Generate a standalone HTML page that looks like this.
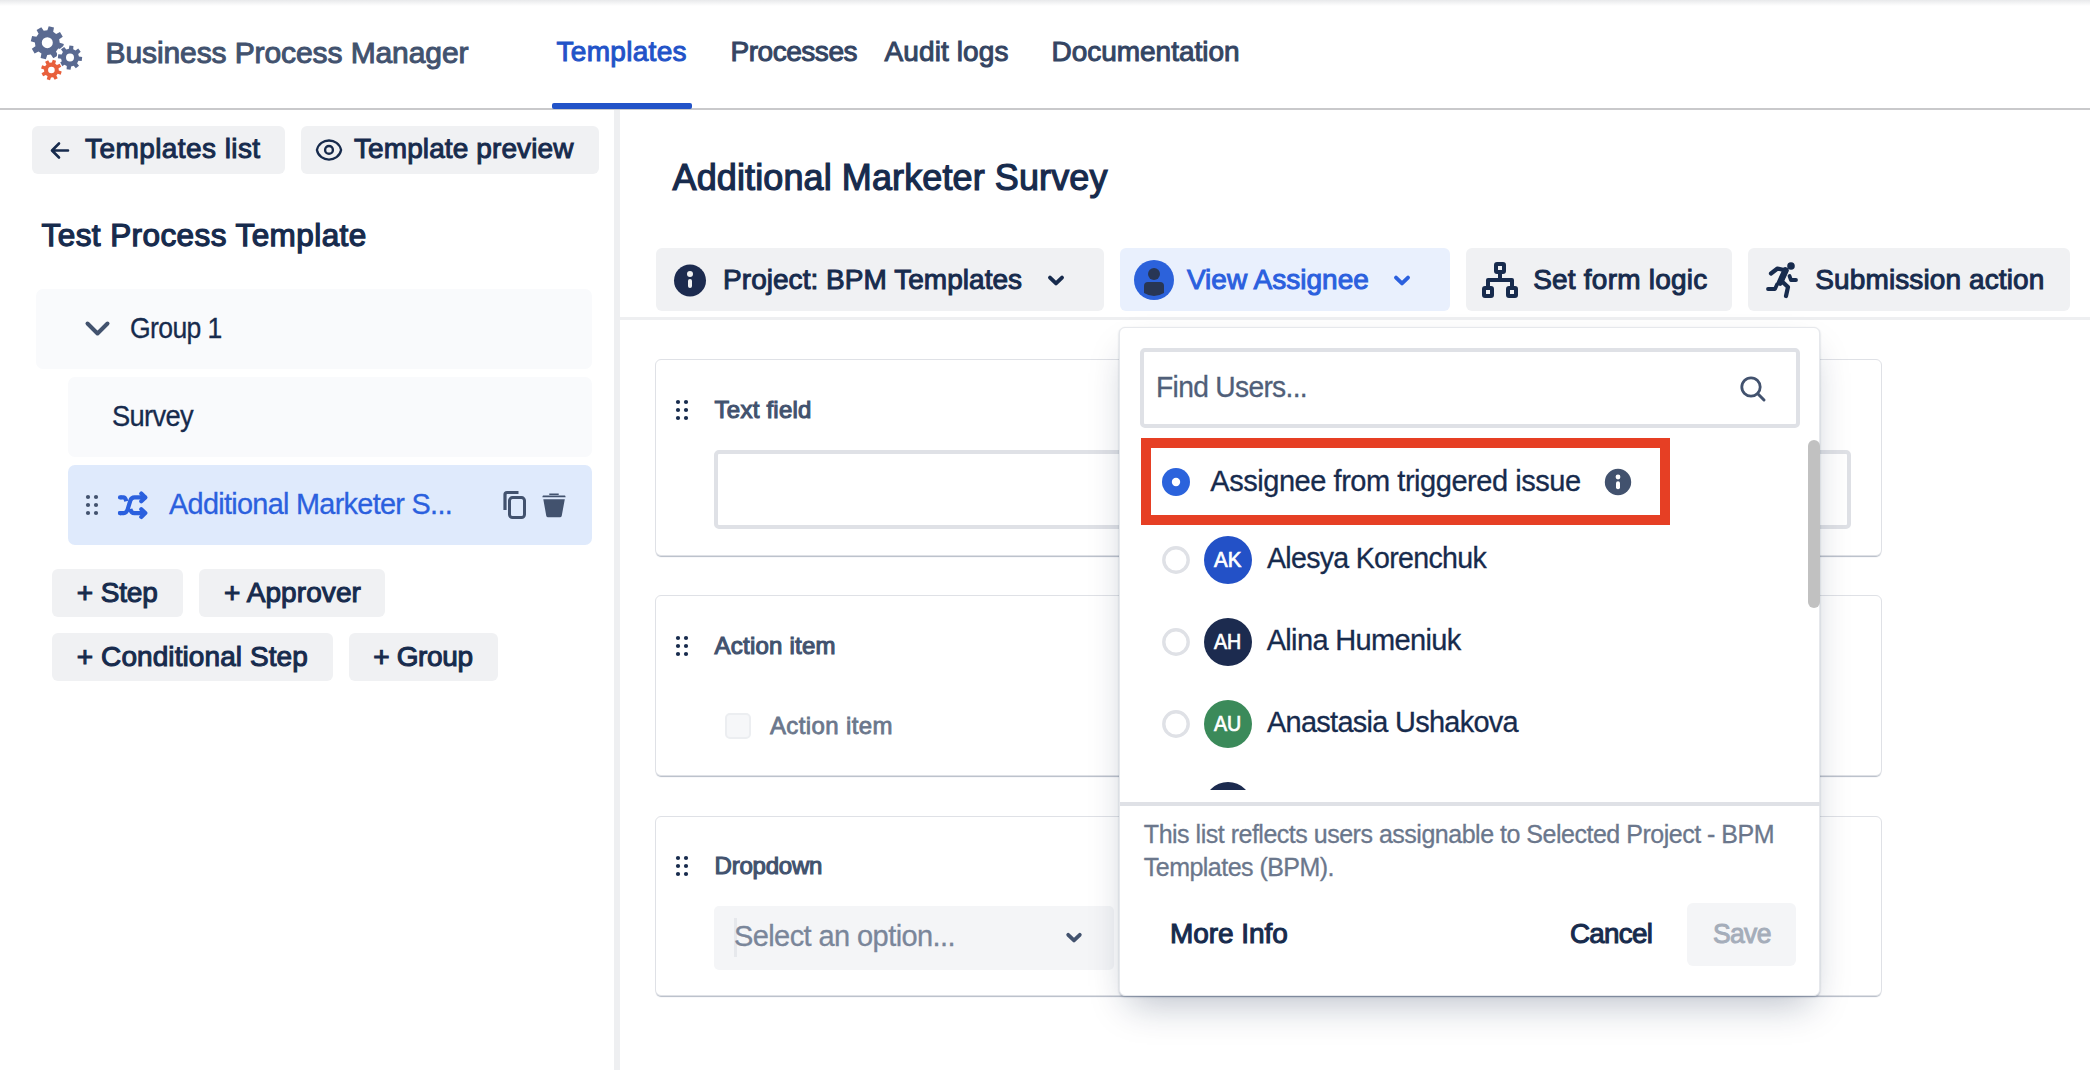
<!DOCTYPE html>
<html><head><meta charset="utf-8"><title>BPM</title>
<style>
html,body{margin:0;padding:0;background:#fff;width:2090px;height:1070px;overflow:hidden;position:relative}
body{font-family:"Liberation Sans",sans-serif}
.t{position:absolute;white-space:nowrap}
.b{position:absolute}
.s{position:absolute;overflow:visible}
</style></head><body>
<div class="b" style="left:0;top:0;width:2090px;height:6px;background:linear-gradient(#e8e9eb,#ffffff)"></div>
<div class="b" style="left:0px;top:108px;width:2090px;height:2px;background:#c9c9cb;border-radius:0px;"></div>
<div class="b" style="left:552px;top:103px;width:140px;height:6px;background:#2253c8;border-radius:2px;"></div>
<svg class="s" style="left:0px;top:0px;" width="110" height="100" viewBox="0 0 110 100"><path d="M59.70 42.78 L63.84 44.11 L62.49 49.39 L58.22 48.57 L56.01 51.53 L58.00 55.39 L53.31 58.17 L50.87 54.58 L47.22 55.10 L45.89 59.24 L40.61 57.89 L41.43 53.62 L38.47 51.41 L34.61 53.40 L31.83 48.71 L35.42 46.27 L34.90 42.62 L30.76 41.29 L32.11 36.01 L36.38 36.83 L38.59 33.87 L36.60 30.01 L41.29 27.23 L43.73 30.82 L47.38 30.30 L48.71 26.16 L53.99 27.51 L53.17 31.78 L56.13 33.99 L59.99 32.00 L62.77 36.69 L59.18 39.13Z M52.80 42.70 A5.5 5.5 0 1 0 41.80 42.70 A5.5 5.5 0 1 0 52.80 42.70Z" fill="#5a6a91" fill-rule="evenodd"/><path d="M78.93 56.49 L82.19 57.05 L81.71 61.03 L78.41 60.80 L77.10 63.13 L79.01 65.83 L75.85 68.30 L73.69 65.81 L71.11 66.53 L70.55 69.79 L66.57 69.31 L66.80 66.01 L64.47 64.70 L61.77 66.61 L59.30 63.45 L61.79 61.29 L61.07 58.71 L57.81 58.15 L58.29 54.17 L61.59 54.40 L62.90 52.07 L60.99 49.37 L64.15 46.90 L66.31 49.39 L68.89 48.67 L69.45 45.41 L73.43 45.89 L73.20 49.19 L75.53 50.50 L78.23 48.59 L80.70 51.75 L78.21 53.91Z M74.00 57.60 A4.0 4.0 0 1 0 66.00 57.60 A4.0 4.0 0 1 0 74.00 57.60Z" fill="#5a6a91" fill-rule="evenodd" stroke="#fff" stroke-width="2.4" paint-order="stroke" stroke-linejoin="round"/><path d="M58.79 70.42 L61.71 71.40 L60.70 74.66 L57.73 73.83 L56.33 75.52 L57.70 78.28 L54.68 79.87 L53.17 77.18 L50.98 77.39 L50.00 80.31 L46.74 79.30 L47.57 76.33 L45.88 74.93 L43.12 76.30 L41.53 73.28 L44.22 71.77 L44.01 69.58 L41.09 68.60 L42.10 65.34 L45.07 66.17 L46.47 64.48 L45.10 61.72 L48.12 60.13 L49.63 62.82 L51.82 62.61 L52.80 59.69 L56.06 60.70 L55.23 63.67 L56.92 65.07 L59.68 63.70 L61.27 66.72 L58.58 68.23Z M54.70 70.00 A3.3 3.3 0 1 0 48.10 70.00 A3.3 3.3 0 1 0 54.70 70.00Z" fill="#e8603c" fill-rule="evenodd" stroke="#fff" stroke-width="2.4" paint-order="stroke" stroke-linejoin="round"/></svg>
<div class="t" style="left:105.50px;top:34.80px;font-size:30px;line-height:36px;color:#42526e;letter-spacing:-0.096px;-webkit-text-stroke:1.0px #42526e;">Business Process Manager</div>
<div class="t" style="left:556.50px;top:35.09px;font-size:28px;line-height:34px;color:#2253c8;letter-spacing:0.300px;-webkit-text-stroke:1.0px #2253c8;">Templates</div>
<div class="t" style="left:730.50px;top:35.09px;font-size:28px;line-height:34px;color:#344563;letter-spacing:-0.462px;-webkit-text-stroke:1.0px #344563;">Processes</div>
<div class="t" style="left:884.50px;top:35.09px;font-size:28px;line-height:34px;color:#344563;letter-spacing:0.111px;-webkit-text-stroke:1.0px #344563;">Audit logs</div>
<div class="t" style="left:1051.50px;top:35.09px;font-size:28px;line-height:34px;color:#344563;letter-spacing:-0.025px;-webkit-text-stroke:1.0px #344563;">Documentation</div>
<div class="b" style="left:614px;top:110px;width:6px;height:960px;background:#eeeff1;border-radius:0px;"></div>
<div class="b" style="left:32px;top:126px;width:253px;height:48px;background:#f0f1f3;border-radius:6px;"></div>
<svg class="s" style="left:48px;top:138.7px;" width="24" height="22" viewBox="0 0 24 22"><path d="M20 11.5H5 M11 4.5L4 11.5L11 18.5" stroke="#172b4d" stroke-width="2.6" fill="none" stroke-linecap="round" stroke-linejoin="round"/></svg>
<div class="t" style="left:85.10px;top:132.09px;font-size:28px;line-height:34px;color:#172b4d;letter-spacing:0.415px;-webkit-text-stroke:1.0px #172b4d;">Templates list</div>
<div class="b" style="left:301px;top:126px;width:298px;height:48px;background:#f0f1f3;border-radius:6px;"></div>
<svg class="s" style="left:312px;top:136px;" width="34" height="28" viewBox="0 0 34 28"><path d="M4.9 14 C7.6 1.3 26.4 1.3 29.1 14 C26.4 26.7 7.6 26.7 4.9 14Z" stroke="#172b4d" stroke-width="2.3" fill="none" stroke-linejoin="round"/><circle cx="17" cy="13.9" r="3.9" stroke="#172b4d" stroke-width="2.4" fill="none"/></svg>
<div class="t" style="left:354.00px;top:132.09px;font-size:28px;line-height:34px;color:#172b4d;letter-spacing:0.100px;-webkit-text-stroke:1.0px #172b4d;">Template preview</div>
<div class="t" style="left:41.52px;top:215.98px;font-size:31.5px;line-height:38px;color:#172b4d;letter-spacing:0.422px;-webkit-text-stroke:1.25px #172b4d;">Test Process Template</div>
<div class="b" style="left:36px;top:289px;width:556px;height:80px;background:#f9fafc;border-radius:7px;"></div>
<svg class="s" style="left:84px;top:320px;" width="28" height="18" viewBox="0 0 28 18"><path d="M3.5 3.5L13.5 13.5L23.5 3.5" stroke="#42526e" stroke-width="4" fill="none" stroke-linecap="round" stroke-linejoin="round"/></svg>
<div class="t" style="left:129.65px;top:310.75px;font-size:29px;line-height:35px;color:#172b4d;letter-spacing:-0.700px;-webkit-text-stroke:0.3px #172b4d;transform:scaleX(0.9165);transform-origin:0 0;">Group 1</div>
<div class="b" style="left:68px;top:377px;width:524px;height:80px;background:#f9fafc;border-radius:7px;"></div>
<div class="t" style="left:112.35px;top:399.15px;font-size:29px;line-height:35px;color:#172b4d;letter-spacing:-0.700px;-webkit-text-stroke:0.3px #172b4d;transform:scaleX(0.9412);transform-origin:0 0;">Survey</div>
<div class="b" style="left:68px;top:465px;width:524px;height:80px;background:#dfeafc;border-radius:7px;"></div>
<svg class="s" style="left:84px;top:493px;" width="16" height="24" viewBox="0 0 16 24"><circle cx="4" cy="4" r="2.1" fill="#42526e"/><circle cx="4" cy="12" r="2.1" fill="#42526e"/><circle cx="4" cy="20" r="2.1" fill="#42526e"/><circle cx="12" cy="4" r="2.1" fill="#42526e"/><circle cx="12" cy="12" r="2.1" fill="#42526e"/><circle cx="12" cy="20" r="2.1" fill="#42526e"/></svg>
<svg class="s" style="left:110px;top:485px;" width="40" height="40" viewBox="0 0 40 40"><g stroke="#2b60de" stroke-width="4.2" fill="none" stroke-linejoin="round"><path d="M10.5 12.4H13.3Q15.3 12.4 16.3 16.3" stroke-linecap="butt"/><path d="M10 28.1H13.8Q16.5 28.1 17.6 24.5L20.3 15.6Q21.4 12.4 24.5 12.4H35" stroke-linecap="round"/><path d="M20.3 23.8Q21 28.1 24.5 28.1H35" stroke-linecap="butt"/><path d="M31.3 8.6L35.3 12.4L31.3 16.2 M31.3 24.3L35.3 28.1L31.3 31.9" stroke-linecap="round"/></g><path d="M10 12.4H10.5M10 28.1H10.5" stroke="#2b60de" stroke-width="4.2" stroke-linecap="round"/></svg>
<div class="t" style="left:168.55px;top:486.75px;font-size:29px;line-height:35px;color:#2b60de;letter-spacing:-0.700px;-webkit-text-stroke:0.3px #2b60de;transform:scaleX(0.9944);transform-origin:0 0;">Additional Marketer S...</div>
<svg class="s" style="left:500px;top:488px;" width="30" height="34" viewBox="0 0 30 34"><path d="M5 22V6.5Q5 4.5 7 4.5H18.5" stroke="#42526e" stroke-width="3.2" fill="none" stroke-linecap="butt"/><rect x="9.5" y="9.6" width="15" height="20" rx="3" stroke="#42526e" stroke-width="3" fill="none"/></svg>
<svg class="s" style="left:540px;top:490px;" width="28" height="30" viewBox="0 0 28 30"><path d="M9.3 3.6H18.7V5H9.3Z M3 5.5Q2.2 6.7 2.5 7.2H25.5Q25.8 6.7 25 5.5Z M3.3 9.2H24.8L21.7 26Q21.3 27.2 20 27.2H8Q6.7 27.2 6.3 26Z" fill="#42526e"/></svg>
<div class="b" style="left:52px;top:569px;width:131px;height:48px;background:#f0f1f3;border-radius:6px;"></div>
<div class="t" style="left:76.83px;top:575.99px;font-size:28px;line-height:34px;color:#172b4d;letter-spacing:-0.150px;-webkit-text-stroke:1.05px #172b4d;">+ Step</div>
<div class="b" style="left:199px;top:569px;width:186px;height:48px;background:#f0f1f3;border-radius:6px;"></div>
<div class="t" style="left:223.93px;top:575.99px;font-size:28px;line-height:34px;color:#172b4d;letter-spacing:0.083px;-webkit-text-stroke:1.05px #172b4d;">+ Approver</div>
<div class="b" style="left:52px;top:633px;width:281px;height:48px;background:#f0f1f3;border-radius:6px;"></div>
<div class="t" style="left:76.83px;top:639.99px;font-size:28px;line-height:34px;color:#172b4d;letter-spacing:0.079px;-webkit-text-stroke:1.05px #172b4d;">+ Conditional Step</div>
<div class="b" style="left:349px;top:633px;width:149px;height:48px;background:#f0f1f3;border-radius:6px;"></div>
<div class="t" style="left:373.22px;top:639.99px;font-size:28px;line-height:34px;color:#172b4d;letter-spacing:-0.342px;-webkit-text-stroke:1.05px #172b4d;">+ Group</div>
<div class="t" style="left:672.60px;top:155.92px;font-size:36px;line-height:43px;color:#172b4d;letter-spacing:0.104px;-webkit-text-stroke:1.2px #172b4d;">Additional Marketer Survey</div>
<div class="b" style="left:616px;top:317px;width:1474px;height:3px;background:#eeeff1;border-radius:0px;"></div>
<div class="b" style="left:656px;top:248px;width:448px;height:63px;background:#f0f1f3;border-radius:6px;"></div>
<svg class="s" style="left:672px;top:262px;" width="36" height="36" viewBox="0 0 36 36"><circle cx="18" cy="18.5" r="16" fill="#1c2b4f"/><circle cx="18" cy="12" r="3" fill="#f0f1f3"/><rect x="16" y="17" width="4" height="9" rx="2" fill="#f0f1f3"/></svg>
<div class="t" style="left:723.10px;top:263.29px;font-size:28px;line-height:34px;color:#172b4d;letter-spacing:0.033px;-webkit-text-stroke:1.0px #172b4d;">Project: BPM Templates</div>
<svg class="s" style="left:1044px;top:270px;" width="24" height="20" viewBox="0 0 24 20"><path d="M6 7.6L12 13.4L18 7.6" stroke="#172b4d" stroke-width="3.9" fill="none" stroke-linecap="round" stroke-linejoin="round"/></svg>
<div class="b" style="left:1120px;top:248px;width:330px;height:63px;background:#e9f0fd;border-radius:6px;"></div>
<svg class="s" style="left:1132px;top:258px;" width="44" height="44" viewBox="0 0 44 44"><circle cx="22" cy="22" r="20" fill="#2c62db"/><circle cx="22" cy="16" r="6" fill="#283654"/><path d="M12 28Q12 24 16 24H28Q32 24 32 28V35Q27 38 22 38Q17 38 12 35Z" fill="#283654"/></svg>
<div class="t" style="left:1186.90px;top:263.29px;font-size:28px;line-height:34px;color:#2b60de;letter-spacing:0.033px;-webkit-text-stroke:1.0px #2b60de;">View Assignee</div>
<svg class="s" style="left:1390px;top:270px;" width="24" height="20" viewBox="0 0 24 20"><path d="M6 7.6L12 13.4L18 7.6" stroke="#2b60de" stroke-width="3.9" fill="none" stroke-linecap="round" stroke-linejoin="round"/></svg>
<div class="b" style="left:1466px;top:248px;width:266px;height:63px;background:#f0f1f3;border-radius:6px;"></div>
<svg class="s" style="left:1482px;top:262px;" width="36" height="36" viewBox="0 0 36 36"><g fill="none" stroke="#172b4d" stroke-width="4" stroke-linejoin="round"><rect x="14" y="2" width="8" height="8" rx="1"/><rect x="2" y="26" width="8" height="8" rx="1"/><rect x="26" y="26" width="8" height="8" rx="1"/><path d="M18 10V18 M6 24V18H30V24"/></g></svg>
<div class="t" style="left:1533.20px;top:263.29px;font-size:28px;line-height:34px;color:#172b4d;letter-spacing:0.215px;-webkit-text-stroke:1.0px #172b4d;">Set form logic</div>
<div class="b" style="left:1748px;top:248px;width:322px;height:63px;background:#f0f1f3;border-radius:6px;"></div>
<svg class="s" style="left:1764px;top:260px;" width="38" height="40" viewBox="0 0 38 40"><circle cx="27" cy="6" r="3.8" fill="#172b4d"/><g stroke="#172b4d" fill="none" stroke-linecap="round" stroke-linejoin="round"><path d="M7 13.5L13.5 8.5L22 10.5L17.5 21L24 27L22 36" stroke-width="4.2"/><path d="M21.5 10.5L16 22.5" stroke-width="6.5"/><path d="M25.5 16L27 20H32" stroke-width="3.8"/><path d="M13 24.5L11 29H4" stroke-width="3.8"/></g></svg>
<div class="t" style="left:1815.30px;top:263.29px;font-size:28px;line-height:34px;color:#172b4d;letter-spacing:0.113px;-webkit-text-stroke:1.0px #172b4d;">Submission action</div>
<div class="b" style="left:655px;top:359px;width:1227px;height:197px;background:#ffffff;border-radius:6px;border:1px solid #dfe1e6;box-shadow:0 2px 1px -1px rgba(9,30,66,0.30);box-sizing:border-box"></div>
<svg class="s" style="left:675px;top:399px;" width="14" height="22" viewBox="0 0 14 22"><circle cx="3" cy="3" r="2.1" fill="#172b4d"/><circle cx="3" cy="11" r="2.1" fill="#172b4d"/><circle cx="3" cy="19" r="2.1" fill="#172b4d"/><circle cx="11" cy="3" r="2.1" fill="#172b4d"/><circle cx="11" cy="11" r="2.1" fill="#172b4d"/><circle cx="11" cy="19" r="2.1" fill="#172b4d"/></svg>
<div class="t" style="left:714.55px;top:395.18px;font-size:24px;line-height:29px;color:#42526e;letter-spacing:0.244px;-webkit-text-stroke:1.1px #42526e;">Text field</div>
<div class="b" style="left:714px;top:450px;width:1137px;height:79px;background:#ffffff;border-radius:5px;border:4px solid #dfe1e6;box-sizing:border-box"></div>
<div class="b" style="left:655px;top:595px;width:1227px;height:181px;background:#ffffff;border-radius:6px;border:1px solid #dfe1e6;box-shadow:0 2px 1px -1px rgba(9,30,66,0.30);box-sizing:border-box"></div>
<svg class="s" style="left:675px;top:635px;" width="14" height="22" viewBox="0 0 14 22"><circle cx="3" cy="3" r="2.1" fill="#172b4d"/><circle cx="3" cy="11" r="2.1" fill="#172b4d"/><circle cx="3" cy="19" r="2.1" fill="#172b4d"/><circle cx="11" cy="3" r="2.1" fill="#172b4d"/><circle cx="11" cy="11" r="2.1" fill="#172b4d"/><circle cx="11" cy="19" r="2.1" fill="#172b4d"/></svg>
<div class="t" style="left:714.55px;top:631.18px;font-size:24px;line-height:29px;color:#42526e;letter-spacing:0.220px;-webkit-text-stroke:1.1px #42526e;">Action item</div>
<div class="b" style="left:725px;top:713px;width:26px;height:26px;background:#f6f7f9;border-radius:5px;border:2px solid #eceef1;box-sizing:border-box"></div>
<div class="t" style="left:769.90px;top:711.18px;font-size:24px;line-height:29px;color:#6b778c;letter-spacing:0.400px;-webkit-text-stroke:0.8px #6b778c;">Action item</div>
<div class="b" style="left:655px;top:816px;width:1227px;height:180px;background:#ffffff;border-radius:6px;border:1px solid #dfe1e6;box-shadow:0 2px 1px -1px rgba(9,30,66,0.30);box-sizing:border-box"></div>
<svg class="s" style="left:675px;top:855px;" width="14" height="22" viewBox="0 0 14 22"><circle cx="3" cy="3" r="2.1" fill="#172b4d"/><circle cx="3" cy="11" r="2.1" fill="#172b4d"/><circle cx="3" cy="19" r="2.1" fill="#172b4d"/><circle cx="11" cy="3" r="2.1" fill="#172b4d"/><circle cx="11" cy="11" r="2.1" fill="#172b4d"/><circle cx="11" cy="19" r="2.1" fill="#172b4d"/></svg>
<div class="t" style="left:714.55px;top:850.98px;font-size:24px;line-height:29px;color:#42526e;letter-spacing:-0.214px;-webkit-text-stroke:1.1px #42526e;">Dropdown</div>
<div class="b" style="left:714px;top:906px;width:400px;height:64px;background:#f4f5f7;border-radius:5px;"></div>
<div class="b" style="left:734px;top:918px;width:3px;height:39px;background:#e6e8ec;border-radius:0px;"></div>
<div class="t" style="left:733.95px;top:918.85px;font-size:29px;line-height:35px;color:#7a869a;letter-spacing:-0.583px;-webkit-text-stroke:0.3px #7a869a;">Select an option...</div>
<svg class="s" style="left:1062px;top:928px;" width="24" height="20" viewBox="0 0 24 20"><path d="M6.2 6.8L12 12.4L17.8 6.8" stroke="#42526e" stroke-width="3.8" fill="none" stroke-linecap="round" stroke-linejoin="round"/></svg>
<div class="b" style="left:1119px;top:327px;width:701px;height:669px;background:#ffffff;border-radius:6px;border:1px solid #e6e8ec;box-sizing:border-box;box-shadow:0 18px 36px -10px rgba(9,30,66,0.28), 0 1px 2px rgba(9,30,66,0.25)"></div>
<div class="b" style="left:1140px;top:348px;width:660px;height:80px;background:#ffffff;border-radius:5px;border:4px solid #dfe1e6;box-sizing:border-box"></div>
<div class="t" style="left:1156.25px;top:369.95px;font-size:29px;line-height:35px;color:#505f79;letter-spacing:-0.700px;-webkit-text-stroke:0.3px #505f79;transform:scaleX(0.9724);transform-origin:0 0;">Find Users...</div>
<svg class="s" style="left:1736px;top:372px;" width="32" height="32" viewBox="0 0 32 32"><circle cx="15" cy="15" r="9.2" stroke="#42526e" stroke-width="2.8" fill="none"/><path d="M21.8 21.8L28 28" stroke="#42526e" stroke-width="3" stroke-linecap="round"/></svg>
<div class="b" style="left:1141px;top:438px;width:529px;height:87px;background:transparent;border-radius:0px;border:10px solid #e63f24;box-sizing:border-box"></div>
<svg class="s" style="left:1160px;top:466px;" width="32" height="32" viewBox="0 0 32 32"><circle cx="16" cy="16" r="14" fill="#2b63dc"/><circle cx="16" cy="16" r="4.2" fill="#fff"/></svg>
<div class="t" style="left:1210.35px;top:463.95px;font-size:29px;line-height:35px;color:#172b4d;letter-spacing:-0.461px;-webkit-text-stroke:0.3px #172b4d;">Assignee from triggered issue</div>
<svg class="s" style="left:1603px;top:467px;" width="30" height="30" viewBox="0 0 30 30"><circle cx="15" cy="15" r="13.2" fill="#42526e"/><circle cx="15" cy="10" r="2.4" fill="#fff"/><rect x="13" y="14.2" width="4" height="8" rx="2" fill="#fff"/></svg>
<div class="b" style="left:1808px;top:440px;width:12px;height:168px;background:#c1c1c1;border-radius:6px;"></div>
<svg class="s" style="left:1160px;top:544px;" width="32" height="32" viewBox="0 0 32 32"><circle cx="16" cy="16" r="12.2" stroke="#dfe1e6" stroke-width="3.4" fill="none"/></svg>
<svg class="s" style="left:1202px;top:534px;" width="52" height="52" viewBox="0 0 52 52"><circle cx="26" cy="26" r="24" fill="#2351c7"/></svg>
<div class="t" style="left:1213.85px;top:547.45px;font-size:21.2px;line-height:25px;color:#ffffff;letter-spacing:-0.000px;-webkit-text-stroke:0.7px #ffffff;transform:scaleX(0.9647);transform-origin:0 0;">AK</div>
<div class="t" style="left:1266.65px;top:541.25px;font-size:29px;line-height:35px;color:#172b4d;letter-spacing:-0.700px;-webkit-text-stroke:0.3px #172b4d;transform:scaleX(0.9839);transform-origin:0 0;">Alesya Korenchuk</div>
<svg class="s" style="left:1160px;top:626px;" width="32" height="32" viewBox="0 0 32 32"><circle cx="16" cy="16" r="12.2" stroke="#dfe1e6" stroke-width="3.4" fill="none"/></svg>
<svg class="s" style="left:1202px;top:616px;" width="52" height="52" viewBox="0 0 52 52"><circle cx="26" cy="26" r="24" fill="#1c2b4f"/></svg>
<div class="t" style="left:1213.85px;top:629.45px;font-size:21.2px;line-height:25px;color:#ffffff;letter-spacing:-0.000px;-webkit-text-stroke:0.7px #ffffff;transform:scaleX(0.9254);transform-origin:0 0;">AH</div>
<div class="t" style="left:1266.65px;top:623.25px;font-size:29px;line-height:35px;color:#172b4d;letter-spacing:-0.654px;-webkit-text-stroke:0.3px #172b4d;">Alina Humeniuk</div>
<svg class="s" style="left:1160px;top:708px;" width="32" height="32" viewBox="0 0 32 32"><circle cx="16" cy="16" r="12.2" stroke="#dfe1e6" stroke-width="3.4" fill="none"/></svg>
<svg class="s" style="left:1202px;top:698px;" width="52" height="52" viewBox="0 0 52 52"><circle cx="26" cy="26" r="24" fill="#3b8a5a"/></svg>
<div class="t" style="left:1213.85px;top:711.45px;font-size:21.2px;line-height:25px;color:#ffffff;letter-spacing:-0.000px;-webkit-text-stroke:0.7px #ffffff;transform:scaleX(0.9254);transform-origin:0 0;">AU</div>
<div class="t" style="left:1266.65px;top:705.25px;font-size:29px;line-height:35px;color:#172b4d;letter-spacing:-0.700px;-webkit-text-stroke:0.3px #172b4d;transform:scaleX(0.9968);transform-origin:0 0;">Anastasia Ushakova</div>
<div class="b" style="left:1120px;top:780px;width:700px;height:10px;overflow:hidden"><div class="b" style="left:84px;top:2px;width:48px;height:48px;border-radius:50%;background:#1c2b4f"></div></div>
<div class="b" style="left:1120px;top:802px;width:700px;height:4px;background:#dfe1e6;border-radius:0px;"></div>
<div class="t" style="left:1143.85px;top:818.73px;font-size:25px;line-height:30px;color:#6b778c;letter-spacing:-0.488px;-webkit-text-stroke:0.3px #6b778c;">This list reflects users assignable to Selected Project - BPM</div>
<div class="t" style="left:1143.85px;top:852.03px;font-size:25px;line-height:30px;color:#6b778c;letter-spacing:-0.533px;-webkit-text-stroke:0.3px #6b778c;">Templates (BPM).</div>
<div class="t" style="left:1169.93px;top:916.99px;font-size:28px;line-height:34px;color:#172b4d;letter-spacing:-0.044px;-webkit-text-stroke:1.05px #172b4d;">More Info</div>
<div class="t" style="left:1570.33px;top:916.99px;font-size:28px;line-height:34px;color:#172b4d;letter-spacing:-0.700px;-webkit-text-stroke:1.05px #172b4d;transform:scaleX(0.9910);transform-origin:0 0;">Cancel</div>
<div class="b" style="left:1687px;top:903px;width:109px;height:63px;background:#f4f5f7;border-radius:6px;"></div>
<div class="t" style="left:1712.80px;top:916.99px;font-size:28px;line-height:34px;color:#a5adba;letter-spacing:-0.700px;-webkit-text-stroke:1.0px #a5adba;transform:scaleX(0.9465);transform-origin:0 0;">Save</div>
</body></html>
